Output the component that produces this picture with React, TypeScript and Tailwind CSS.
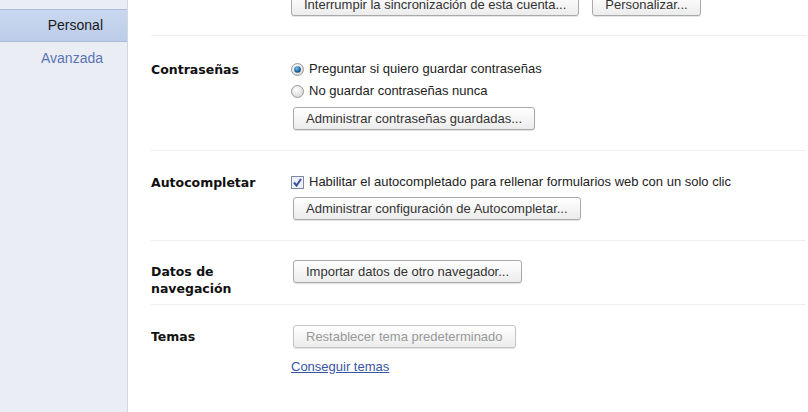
import React from "react";

const Btn = ({ children, disabled = false }: { children: React.ReactNode; disabled?: boolean }) => (
  <button
    className={
      "h-[23px] px-[12px] rounded-[3px] border text-[13px] leading-[21px] bg-gradient-to-b from-[#ffffff] to-[#ececec] shadow-[0_1px_1px_rgba(0,0,0,0.12)] " +
      (disabled ? "border-[#c4c4c4] text-[#999999]" : "border-[#a9a9a9] text-[#333333]")
    }
    style={{ fontFamily: '"Liberation Sans", Arial, sans-serif' }}
  >
    {children}
  </button>
);

const Radio = ({ checked }: { checked?: boolean }) => (
  <svg width="13" height="13" viewBox="0 0 13 13" className="mr-[5px] shrink-0">
    <defs>
      <radialGradient id="rg" cx="0.4" cy="0.35" r="0.7">
        <stop offset="0" stopColor="#ffffff" />
        <stop offset="1" stopColor="#d6d6d6" />
      </radialGradient>
      <radialGradient id="dot" cx="0.4" cy="0.35" r="0.7">
        <stop offset="0" stopColor="#7fc4f0" />
        <stop offset="0.6" stopColor="#1e6fa8" />
        <stop offset="1" stopColor="#0d3f6a" />
      </radialGradient>
    </defs>
    <circle cx="6.5" cy="6.5" r="6" fill="url(#rg)" stroke="#9a9a9a" strokeWidth="1" />
    {checked && <circle cx="6.5" cy="6.5" r="3.3" fill="url(#dot)" />}
  </svg>
);

const Check = () => (
  <svg width="13" height="13" viewBox="0 0 13 13" className="mr-[5px] shrink-0">
    <rect x="0.5" y="0.5" width="12" height="12" fill="#eef0f6" stroke="#7b8aa8" />
    <path d="M3 6.5 L5.5 9.5 L10 3" fill="none" stroke="#3b4fa0" strokeWidth="2" />
  </svg>
);

const Label = ({ children }: { children: React.ReactNode }) => (
  <div
    className="w-[140px] shrink-0 text-[12.5px] font-bold text-[#111111] leading-[17px]"
    style={{ fontFamily: '"DejaVu Sans", Verdana, sans-serif' }}
  >
    {children}
  </div>
);

export default function App() {
  return (
    <div
      className="w-[808px] h-[412px] overflow-hidden flex bg-white text-[13px] text-[#222222]"
      style={{ fontFamily: '"Liberation Sans", Arial, sans-serif' }}
    >
      {/* Sidebar */}
      <div className="w-[128px] shrink-0 h-full bg-[#eaeef4] border-r border-[#d3d8e0] pt-[9px]">
        <div className="h-[33px] bg-gradient-to-b from-[#c9d8ef] to-[#bccde9] border-y border-[#a9bcd9] flex items-center justify-end pr-[24px] text-[14px] text-[#1a1a1a]">
          Personal
        </div>
        <div className="h-[32px] flex items-center justify-end pr-[24px] text-[14px] text-[#5a74b6]">
          Avanzada
        </div>
      </div>

      {/* Main */}
      <div className="flex-1 pl-[23px] pr-[2px]">
        {/* top cut section */}
        <div className="flex pl-[140px] gap-[13px] mt-[-7px] pb-[19px] border-b border-[#eeeeee]">
          <Btn>Interrumpir la sincronización de esta cuenta...</Btn>
          <Btn>Personalizar...</Btn>
        </div>

        {/* Contraseñas */}
        <div className="flex pt-[22px] pb-[20px] border-b border-[#eeeeee]">
          <div className="pt-[3px]">
            <Label>Contraseñas</Label>
          </div>
          <div className="flex flex-col">
            <div className="flex items-center h-[22px]">
              <Radio checked />
              Preguntar si quiero guardar contraseñas
            </div>
            <div className="flex items-center h-[22px]">
              <Radio />
              No guardar contraseñas nunca
            </div>
            <div className="mt-[5px] pl-[2px]">
              <Btn>Administrar contraseñas guardadas...</Btn>
            </div>
          </div>
        </div>

        {/* Autocompletar */}
        <div className="flex pt-[20px] pb-[20px] border-b border-[#eeeeee]">
          <div className="pt-[3px]">
            <Label>Autocompletar</Label>
          </div>
          <div className="flex flex-col">
            <div className="flex items-center h-[22px]">
              <Check />
              Habilitar el autocompletado para rellenar formularios web con un solo clic
            </div>
            <div className="mt-[4px] pl-[2px]">
              <Btn>Administrar configuración de Autocompletar...</Btn>
            </div>
          </div>
        </div>

        {/* Datos de navegación */}
        <div className="flex pt-[19px] pb-[7px] border-b border-[#eeeeee]">
          <div className="pt-[3px]">
            <Label>
              Datos de
              <br />
              navegación
            </Label>
          </div>
          <div className="pl-[2px]">
            <Btn>Importar datos de otro navegador...</Btn>
          </div>
        </div>

        {/* Temas */}
        <div className="flex pt-[20px]">
          <div className="pt-[3px]">
            <Label>Temas</Label>
          </div>
          <div className="flex flex-col">
            <div className="pl-[2px]">
              <Btn disabled>Restablecer tema predeterminado</Btn>
            </div>
            <a href="#" className="mt-[11px] underline text-[#3a54a4] leading-[16px]">
              Conseguir temas
            </a>
          </div>
        </div>
      </div>
    </div>
  );
}
